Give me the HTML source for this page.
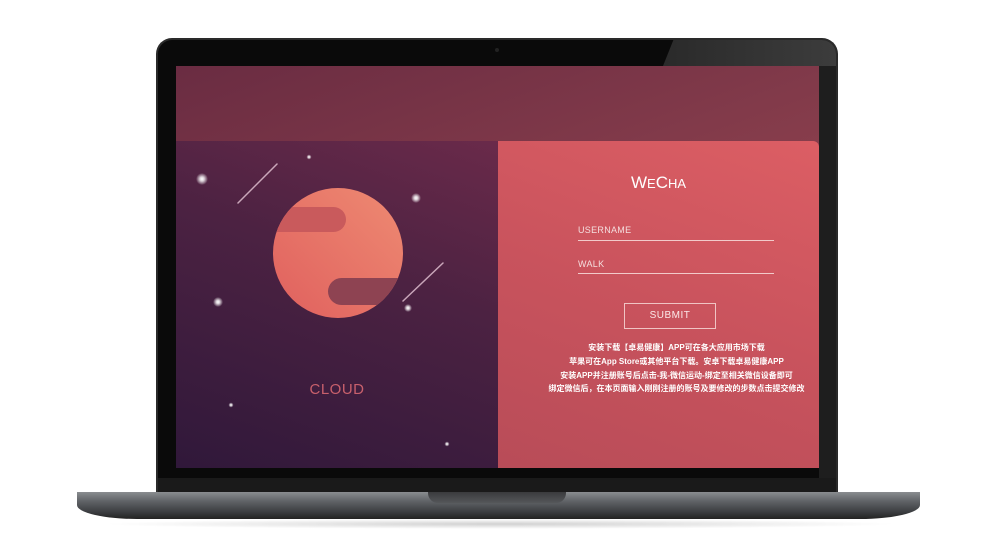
<!DOCTYPE html>
<html><head><meta charset="utf-8"><style>
*{margin:0;padding:0;box-sizing:border-box}
body{width:1000px;height:548px;background:#fff;position:relative;overflow:hidden;font-family:"Liberation Sans","Noto Sans CJK SC",sans-serif}
.abs{position:absolute}
#lid{left:156px;top:38px;width:682px;height:456px;background:#0a0a0a;border-radius:16px 16px 0 0;border:2px solid #2a2a2a;border-bottom:none}
#glare{left:663px;top:40px;width:173px;height:26px;background:linear-gradient(90deg,#2a2a2a,#3c3c3c);clip-path:polygon(6% 0,100% 0,100% 100%,0 100%);border-top-right-radius:14px}
#chin{left:158px;top:478px;width:678px;height:15px;background:#1a1a1a}
#screen{left:176px;top:66px;width:643px;height:402px;background:linear-gradient(160deg,#6a2c42 0%,#853c4b 45%,#a84a52 100%);overflow:hidden}
#lp{left:0;top:75px;width:322px;height:327px;background:linear-gradient(200deg,#6a2a4a 0%,#4c2242 40%,#30183a 100%)}
#rp{left:322px;top:75px;width:321px;height:327px;background:linear-gradient(200deg,#dc5e64 0%,#c9535d 50%,#b84c58 100%);border-radius:0 6px 0 0;color:#fff;text-align:center}
#base{left:77px;top:492px;width:843px;height:27px;background:linear-gradient(180deg,#8a8d90 0%,#5f6266 35%,#3a3c3f 75%,#222 100%);border-radius:0 0 60px 60px/0 0 14px 14px}
#notch{left:428px;top:492px;width:138px;height:11px;background:linear-gradient(#3a3b3d,#55575a);border-radius:0 0 10px 10px}
#shadow{left:100px;top:519px;width:800px;height:10px;background:radial-gradient(ellipse at center,rgba(0,0,0,.18),rgba(0,0,0,0) 70%)}
.lbl{position:absolute;left:80px;font-size:9px;letter-spacing:.3px;color:#f4dede;text-align:left}
.ln{position:absolute;left:80px;width:196px;height:1px;background:#f2caca}
.cn{position:absolute;left:18px;width:100%;font-size:8px;line-height:13px;color:#fff;font-weight:bold}
</style></head><body>
<div class="abs" id="shadow"></div>
<div class="abs" id="lid"></div>
<div class="abs" id="glare"></div>
<div class="abs" style="left:819px;top:66px;width:17px;height:412px;background:#1e1e1e"></div>
<div class="abs" style="left:495px;top:48px;width:4px;height:4px;border-radius:50%;background:#222"></div>
<div class="abs" id="chin"></div>
<div class="abs" id="screen">
 <div class="abs" id="lp">
  <svg width="322" height="327" style="position:absolute;left:0;top:0">
   <defs>
    <radialGradient id="g"><stop offset="0" stop-color="#fff"/><stop offset=".35" stop-color="#fff" stop-opacity=".8"/><stop offset="1" stop-color="#fff" stop-opacity="0"/></radialGradient>
    <linearGradient id="pl" x1="1" y1="0" x2="0" y2="1"><stop offset="0" stop-color="#ee8a72"/><stop offset="1" stop-color="#e0605e"/></linearGradient>
    <clipPath id="c"><circle cx="162" cy="112" r="65"/></clipPath>
   </defs>
   <circle cx="162" cy="112" r="65" fill="url(#pl)"/>
   <g clip-path="url(#c)">
    <rect x="80" y="66" width="90" height="25" rx="12.5" fill="#c95a5c"/>
    <rect x="152" y="137" width="120" height="27" rx="13.5" fill="#8e4352"/>
   </g>
   <line x1="62" y1="62" x2="101" y2="23" stroke="#e8c8d8" stroke-width="1.5" stroke-linecap="round" opacity=".8"/>
   <line x1="227" y1="160" x2="267" y2="122" stroke="#e8c8d8" stroke-width="1.5" stroke-linecap="round" opacity=".8"/>
   <circle cx="26" cy="38" r="6" fill="url(#g)"/>
   <circle cx="133" cy="16" r="2.5" fill="url(#g)"/>
   <circle cx="240" cy="57" r="5" fill="url(#g)"/>
   <circle cx="42" cy="161" r="5" fill="url(#g)"/>
   <circle cx="232" cy="167" r="4" fill="url(#g)"/>
   <circle cx="55" cy="264" r="2.5" fill="url(#g)"/>
   <circle cx="271" cy="303" r="2.5" fill="url(#g)"/>
  </svg>
  <div style="position:absolute;left:0;width:322px;top:240px;text-align:center;font-size:15px;color:#c8606c;letter-spacing:.5px">CLOUD</div>
 </div>
 <div class="abs" id="rp">
  <div style="position:absolute;left:0;width:100%;top:32px;font-size:17px;letter-spacing:0">W<span style="font-size:13px">E</span>C<span style="font-size:13px">HA</span></div>
  <div class="lbl" style="top:84px">USERNAME</div>
  <div class="ln" style="top:99px"></div>
  <div class="lbl" style="top:118px">WALK</div>
  <div class="ln" style="top:132px"></div>
  <div style="position:absolute;left:126px;top:162px;width:92px;height:26px;border:1px solid #f0c4c4;font-size:10px;line-height:24px;color:#fbe8e8;letter-spacing:.5px">SUBMIT</div>
  <div class="cn" style="top:200px">安装下载【卓易健康】APP可在各大应用市场下载</div>
  <div class="cn" style="top:214px">苹果可在App Store或其他平台下载。安卓下载卓易健康APP</div>
  <div class="cn" style="top:228px">安装APP并注册账号后点击-我-微信运动-绑定至相关微信设备即可</div>
  <div class="cn" style="top:241px">绑定微信后，在本页面输入刚刚注册的账号及要修改的步数点击提交修改</div>
 </div>
</div>
<div class="abs" id="base"></div>
<div class="abs" id="notch"></div>
</body></html>
